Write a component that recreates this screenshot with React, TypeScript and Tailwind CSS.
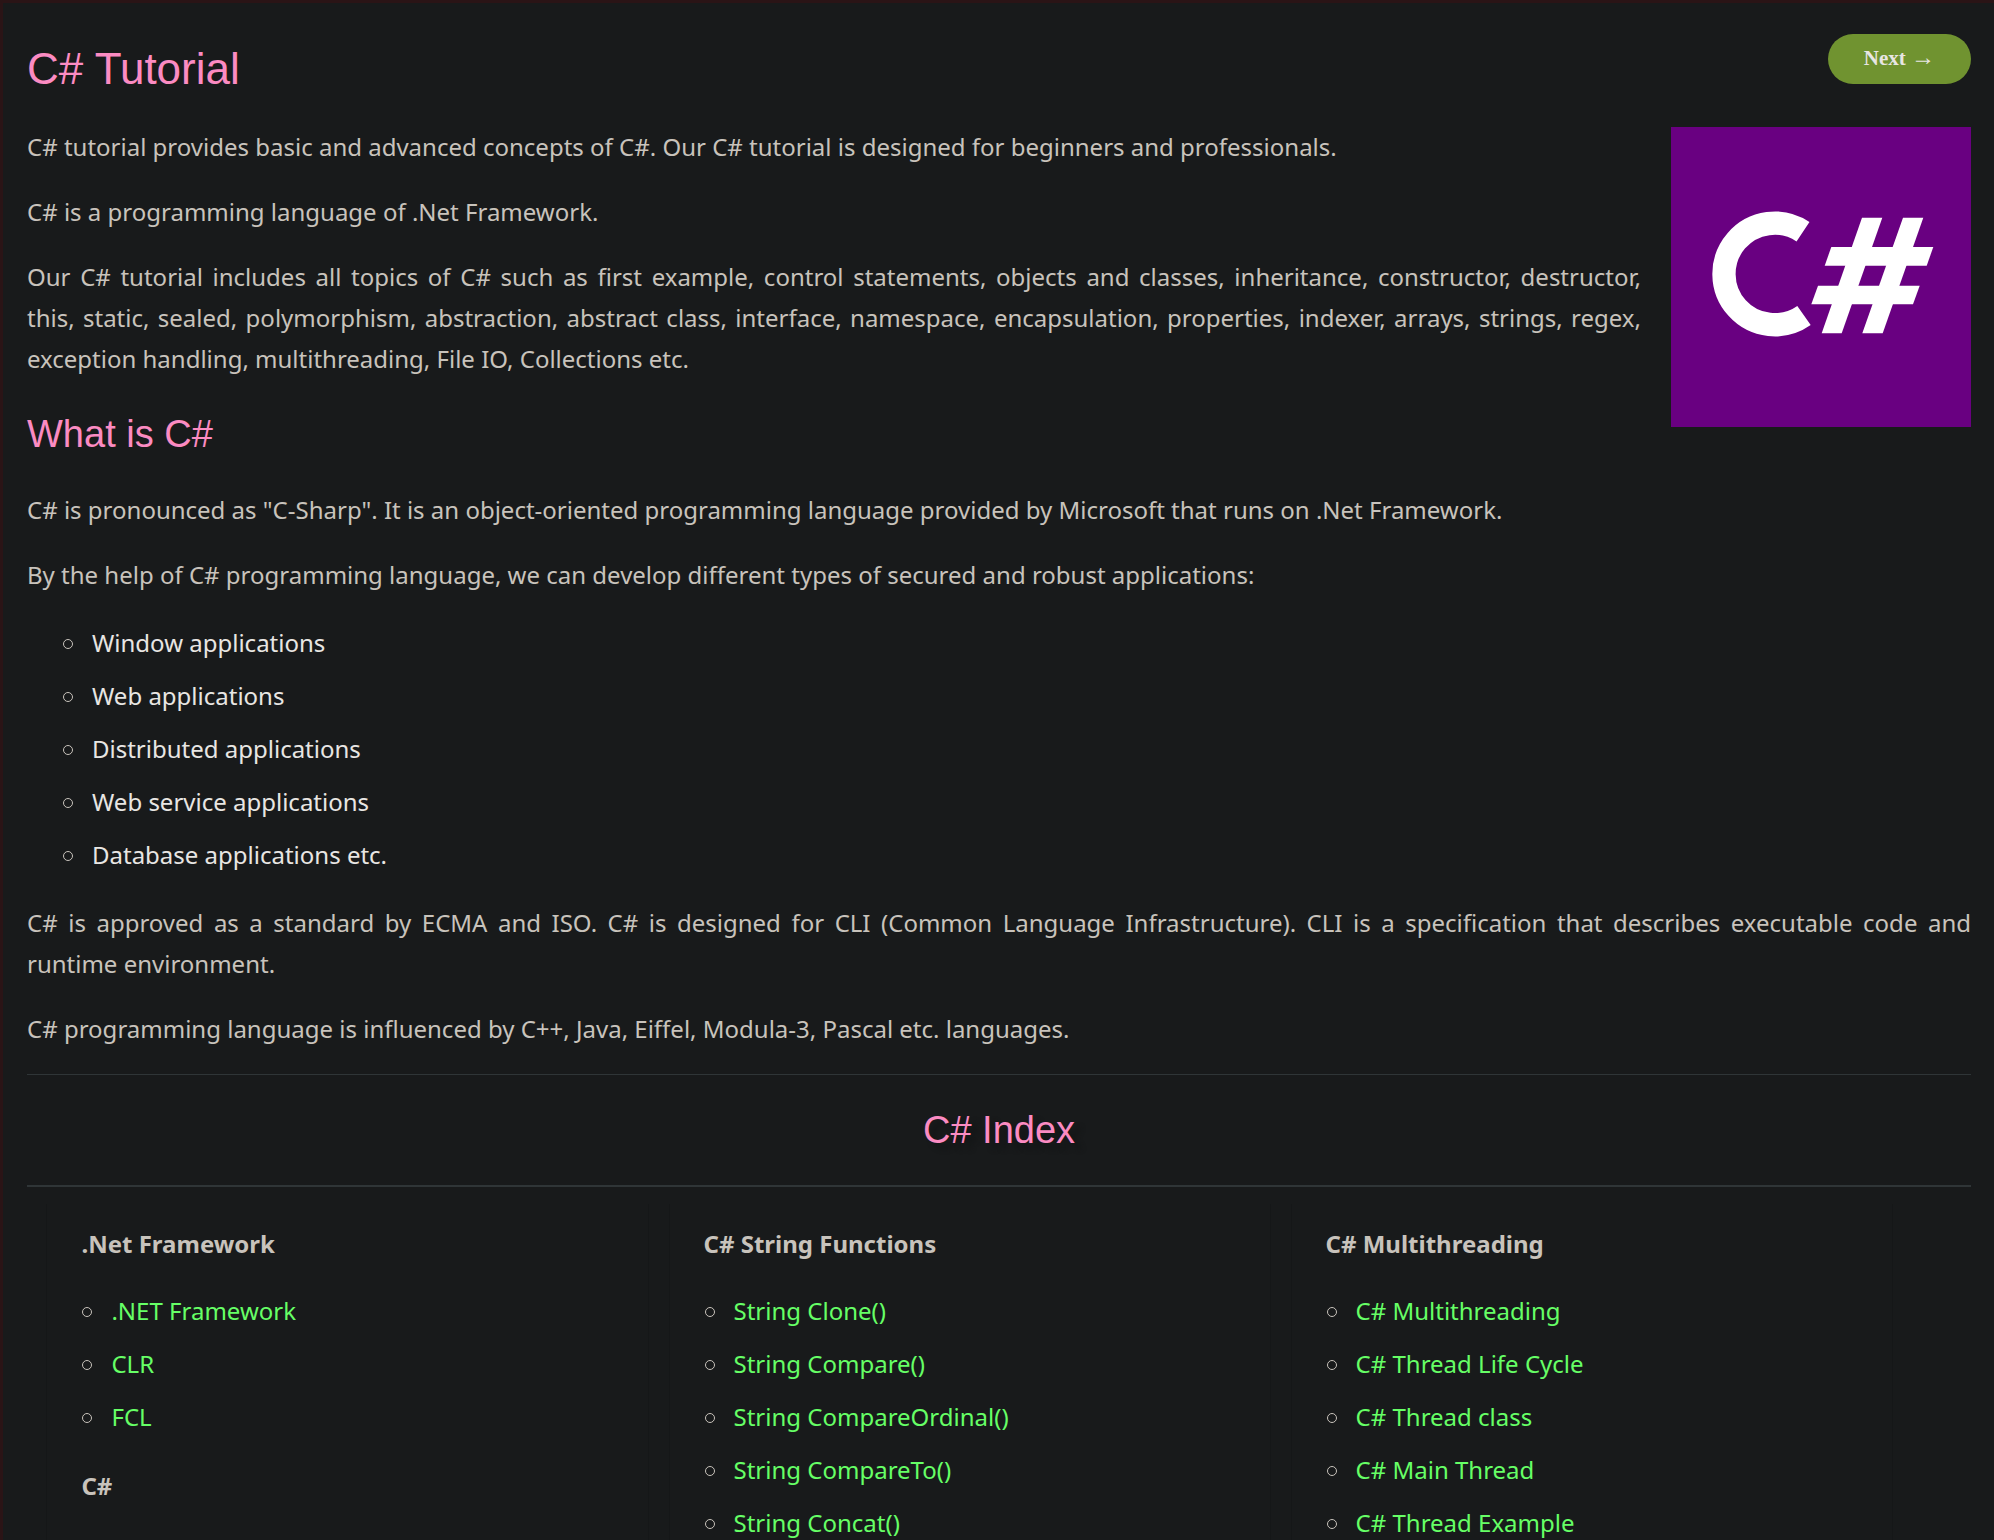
import React from "react";

const applications = [
  "Window applications",
  "Web applications",
  "Distributed applications",
  "Web service applications",
  "Database applications etc.",
];

type Group = { title: string; links: string[] };

const columns: Group[][] = [
  [
    { title: ".Net Framework", links: [".NET Framework", "CLR", "FCL"] },
    { title: "C#", links: [] },
  ],
  [
    {
      title: "C# String Functions",
      links: [
        "String Clone()",
        "String Compare()",
        "String CompareOrdinal()",
        "String CompareTo()",
        "String Concat()",
      ],
    },
  ],
  [
    {
      title: "C# Multithreading",
      links: [
        "C# Multithreading",
        "C# Thread Life Cycle",
        "C# Thread class",
        "C# Main Thread",
        "C# Thread Example",
      ],
    },
  ],
];

function CSharpLogo() {
  return (
    <svg
      role="img"
      aria-label="C# logo"
      viewBox="0 0 300 300"
      className="float-right mt-px ml-[30px] h-[300px] w-[300px]"
    >
      <rect width="300" height="300" fill="#690081" />
      <path d="M132 104.7 A50.8 50.8 0 1 0 133 188.5" fill="none" stroke="#fff" strokeWidth="23.3" />
      <g fill="#fff">
        <path d="M191 90.7H211.3L170.7 206.3H150.7Z" />
        <path d="M232 90.7H252.3L211.7 206.3H191.3Z" />
        <path d="M160.3 120H262.3L255.7 138.7H153.7Z" />
        <path d="M147 158.7H248.7L242 177.3H140.3Z" />
      </g>
    </svg>
  );
}

function Paragraph({ children }: { children: React.ReactNode }) {
  return <p className="mb-6 text-justify">{children}</p>;
}

function RingItem({ children }: { children: React.ReactNode }) {
  return (
    <li className="flex items-center gap-[19px] py-[6px] before:mt-[3px] before:size-[10px] before:shrink-0 before:rounded-full before:border before:border-[#c8c3bc] before:content-['']">
      {children}
    </li>
  );
}

const headingFont = "font-['Liberation_Sans',Arial,sans-serif] text-[#fb8bc2]";

export default function App() {
  return (
    <div className="min-h-screen border-t-3 border-l-3 border-[#2a1416] bg-[#181a1b] pr-[23px] pl-6 font-['Noto_Sans',sans-serif] text-[24px] leading-[41px] text-[#c8c3bc]">
      <header className="flex items-start justify-between pt-[31px]">
        <h1 className={`text-[44px] leading-[70px] ${headingFont}`}>C# Tutorial</h1>
        <a
          href="#next"
          className="rounded-full bg-[#709330] px-9 pb-[2px] font-['Liberation_Serif',serif] text-[21px] leading-[48px] font-bold text-[#e8e6e3]"
        >
          Next <span className="text-[24px] leading-none font-normal">→</span>
        </a>
      </header>

      <main className="pt-[22px]">
        <CSharpLogo />
        <Paragraph>
          C# tutorial provides basic and advanced concepts of C#. Our C# tutorial is designed for
          beginners and professionals.
        </Paragraph>
        <Paragraph>C# is a programming language of .Net Framework.</Paragraph>
        <Paragraph>
          Our C# tutorial includes all topics of C# such as first example, control statements,
          objects and classes, inheritance, constructor, destructor,{" "}
          <span className="whitespace-nowrap">this, static,</span> sealed, polymorphism,
          abstraction, abstract class, interface, namespace, encapsulation, properties, indexer,
          arrays, strings, regex, exception handling, multithreading, File IO, Collections etc.
        </Paragraph>

        <h2 className={`mb-6 text-[38px] leading-[62px] ${headingFont}`}>What is C#</h2>
        <Paragraph>
          C# is pronounced as "C-Sharp". It is an object-oriented programming language provided by
          Microsoft that runs on .Net Framework.
        </Paragraph>
        <Paragraph>
          By the help of C# programming language, we can develop different types of secured and
          robust applications:
        </Paragraph>

        <ul className="-mt-[3px] mb-[21px] pl-9">
          {applications.map((name) => (
            <RingItem key={name}>
              <span className="text-[#e8e6e3]">{name}</span>
            </RingItem>
          ))}
        </ul>

        <Paragraph>
          C# is approved as a standard by ECMA and ISO. C# is designed for CLI (Common Language
          Infrastructure). CLI is a specification that describes executable code and{" "}
          <span className="whitespace-nowrap">runtime environment.</span>
        </Paragraph>
        <Paragraph>
          C# programming language is influenced by C++, Java, Eiffel, Modula-3, Pascal etc.
          languages.
        </Paragraph>

        <hr className="mt-[25px] border-t border-[#2f3537]" />
        <h2
          className={`py-6 text-center text-[38px] leading-[62px] [text-shadow:7px_6px_5px_#131516] ${headingFont}`}
        >
          C# Index
        </h2>
        <hr className="border-t-2 border-[#2f3537]" />

        <div className="flex pt-[17px]">
          {columns.map((groups) => (
            <section
              key={groups[0].title}
              className="ml-[1%] w-[31%] border-x border-[#151718] px-[34px] pt-[19px]"
            >
              {groups.map((group) => (
                <div key={group.title}>
                  <h3 className="mb-5 font-bold">{group.title}</h3>
                  {group.links.length > 0 && (
                    <ul className="mb-[22px] pl-px">
                      {group.links.map((link) => (
                        <RingItem key={link}>
                          <a href="#topic" className="text-[#66ff66]">
                            {link}
                          </a>
                        </RingItem>
                      ))}
                    </ul>
                  )}
                </div>
              ))}
            </section>
          ))}
        </div>
      </main>
    </div>
  );
}
